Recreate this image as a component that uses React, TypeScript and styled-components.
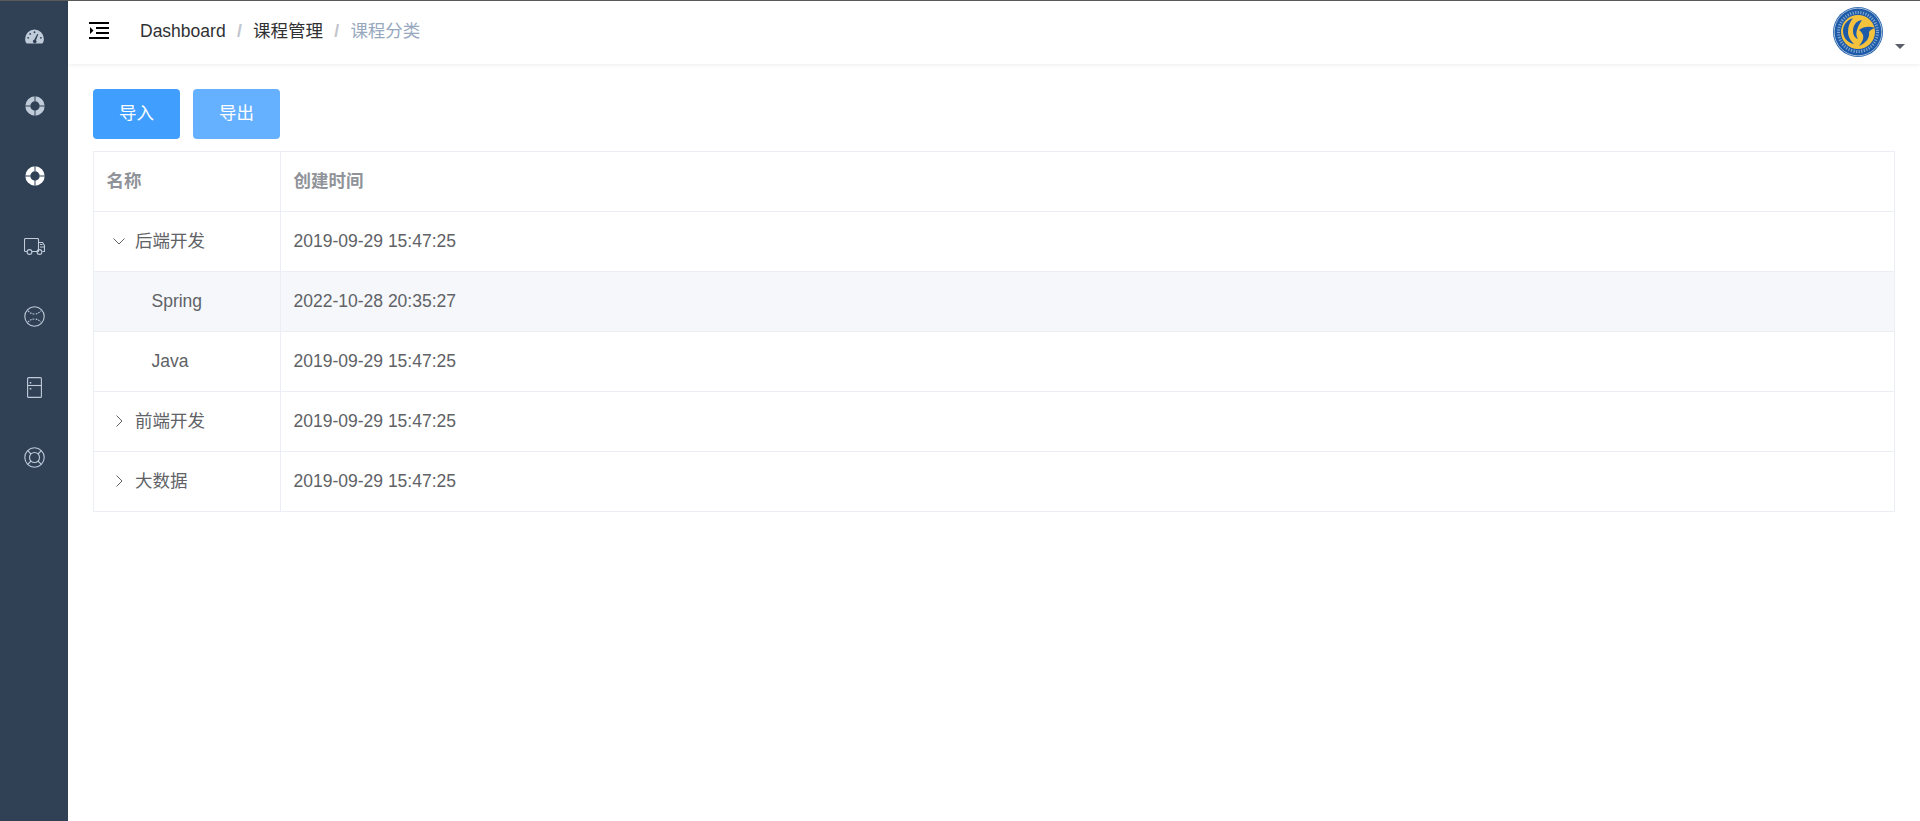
import React from "react";
import styled, { createGlobalStyle } from "styled-components";

const Global = createGlobalStyle`
  html, body { margin: 0; padding: 0; height: 100%; background: #fff; }
  body { font-family: "Liberation Sans", "Noto Sans CJK SC", sans-serif; }
  #root { height: 100%; }
`;

const Page = styled.div`
  display: flex;
  height: 821px;
  border-top: 1px solid #5a5a5a;
  box-sizing: border-box;
  overflow: hidden;
`;
const Sidebar = styled.nav`
  flex: 0 0 68px;
  width: 68px;
  background: #304156;
  display: flex;
  flex-direction: column;
`;
const NavItem = styled.div<{ $active?: boolean }>`
  height: 70.2px;
  display: flex;
  align-items: center;
  justify-content: center;
  padding-left: 1px;
  box-sizing: border-box;
  color: ${(p) => (p.$active ? "#ffffff" : "#bfcbd9")};
`;
const Main = styled.div`
  flex: 1;
  min-width: 0;
  display: flex;
  flex-direction: column;
`;
const Header = styled.header`
  height: 63px;
  display: flex;
  align-items: center;
  background: #fff;
  box-shadow: 0 1px 4px rgba(0, 21, 41, 0.08);
  padding-left: 21px;
  position: relative;
`;
const Hamburger = styled.div`
  width: 20px;
  height: 20px;
  display: flex;
  color: #000;
  margin-top: -3px;
`;
const Crumbs = styled.div`
  margin-left: 31px;
  display: flex;
  align-items: center;
  font-size: 17.5px;
  line-height: 20px;
  margin-top: -3px;
  color: #303133;
`;
const Crumb = styled.span<{ $last?: boolean }>`
  color: ${(p) => (p.$last ? "#97a8be" : "#303133")};
`;
const Sep = styled.span`
  margin: 0 11.25px;
  color: #c0c4cc;
  font-weight: 700;
  font-size: 17.5px;
`;
const Avatar = styled.div`
  margin-left: auto;
  display: flex;
  align-items: flex-end;
  height: 50px;
  padding-right: 15px;
  margin-top: -1px;
`;
const Caret = styled.div`
  width: 0;
  height: 0;
  border-left: 5px solid transparent;
  border-right: 5px solid transparent;
  border-top: 5px solid #5a5e66;
  margin-left: 12px;
  margin-bottom: 8px;
`;
const Content = styled.main`
  padding: 25px 25px 0 25px;
  display: flex;
  flex-direction: column;
`;
const Toolbar = styled.div`
  display: flex;
  gap: 13px;
  margin-bottom: 12px;
`;
const Btn = styled.button<{ $light?: boolean }>`
  width: 87px;
  height: 50px;
  border: 0;
  border-radius: 4px;
  background: ${(p) => (p.$light ? "#66b1ff" : "#409eff")};
  color: #fff;
  font-family: inherit;
  font-size: 17.5px;
  line-height: 20px;
  padding: 0 0 3px;
`;
const Table = styled.div`
  border: 1px solid #ebeef5;
  border-bottom: 0;
  font-size: 17.5px;
  color: #606266;
`;
const Row = styled.div<{ $hover?: boolean }>`
  display: grid;
  grid-template-columns: 186px 1fr;
  height: 60px;
  box-sizing: border-box;
  border-bottom: 1px solid #ebeef5;
  background: ${(p) => (p.$hover ? "#f5f7fa" : "#fff")};
`;
const Cell = styled.div`
  display: flex;
  align-items: center;
  padding-left: 12.5px;
  line-height: 20px;
  padding-bottom: 1px;
  & + & { border-left: 1px solid #ebeef5; }
`;
const Head = styled(Cell)`
  color: #909399;
  font-weight: 700;
  padding-bottom: 1px;
`;
const Expand = styled.span`
  width: 24px;
  height: 20px;
  margin-right: 4.5px;
  display: flex;
  align-items: center;
  justify-content: center;
  color: #606266;
`;
const Indent = styled.span`
  display: inline-block;
  width: 45px;
`;

const Chevron = ({ open }: { open?: boolean }) => (
  <svg width="14" height="14" viewBox="0 0 14 14" fill="none" stroke="currentColor" strokeWidth="1">
    {open ? <path d="M1.5 4.500L7 10l5.500-5.500" /> : <path d="M4.500 1.500L10 7l-5.500 5.500" />}
  </svg>
);

const Gauge = () => (
  <svg width="19" height="15" viewBox="0 0 20 16" fill="currentColor">
    <path d="M10 .5A10 10 0 0 0 0 10.500c0 1.700.4 3.200 1 4.200.3.500.6.800 1 .8h16c.4 0 .7-.3 1-.8.6-1 1-2.500 1-4.200A10 10 0 0 0 10 .5z" />
    <g fill="#304156">
      <circle cx="10" cy="3.400" r="1" />
      <circle cx="5.400" cy="5.200" r="1" />
      <circle cx="3.200" cy="9.400" r="1" />
      <circle cx="16.800" cy="9.400" r="1" />
      <path d="M12.900 5.200l1.100.500-2.400 6.300a1.900 1.900 0 1 1-1.900-.5z" />
    </g>
  </svg>
);
const Ring = () => (
  <svg width="20" height="20" viewBox="0 0 20 20">
    <circle cx="10" cy="10" r="7.200" fill="none" stroke="currentColor" strokeWidth="5" />
    <path d="M10 0v5.500M10 14.500V20M0 10h5.500M14.500 10H20" stroke="#304156" strokeWidth="1" />
  </svg>
);
const Truck = () => (
  <svg width="21" height="17" viewBox="0 0 21 17" fill="none" stroke="currentColor" strokeWidth="1.100">
    <path d="M3 13.500H1.500a1 1 0 0 1-1-1v-11a1 1 0 0 1 1-1h12a1 1 0 0 1 1 1v12H8" />
    <path d="M14.500 4.500h4l2 3v6h-2M14.500 13.500h-1" />
    <path d="M16 6.500h2.500M16 9h4" />
    <circle cx="5.500" cy="14" r="2.400" />
    <circle cx="15.500" cy="14" r="2.400" />
  </svg>
);
const Ball = () => (
  <svg width="21" height="21" viewBox="0 0 21 21" fill="none" stroke="currentColor" strokeWidth="1.100">
    <circle cx="10.500" cy="10.500" r="9.700" />
    <path d="M4 5c2 1.500 3 3 6.500 3S15 6.500 17 5M4 16c2-1.500 3-3 6.500-3s4.500 1.500 6.500 3" strokeDasharray="1.600 1.200" />
  </svg>
);
const Fridge = () => (
  <svg width="15" height="21" viewBox="0 0 15 21" fill="none" stroke="currentColor" strokeWidth="1.100">
    <rect x=".6" y=".6" width="13.800" height="19.800" rx="1" />
    <path d="M.6 8.500h13.800" />
    <path d="M3.500 5v1.500M3.500 11v1.500" strokeWidth="1.600" />
  </svg>
);
const Buoy = () => (
  <svg width="21" height="21" viewBox="0 0 21 21" fill="none" stroke="currentColor" strokeWidth="1.100">
    <circle cx="10.500" cy="10.500" r="9.700" />
    <circle cx="10.500" cy="10.500" r="5" />
    <path d="M3.700 3.700l3.300 3.300M17.300 3.700L14 7M3.700 17.300L7 14M17.300 17.300L14 14" />
  </svg>
);

const Logo = () => (
  <svg width="50" height="50" viewBox="0 0 50 50">
    <circle cx="25" cy="25" r="25" fill="#1d5ba8" />
    <circle cx="25" cy="25" r="23.800" fill="none" stroke="#fff" strokeWidth=".6" />
    <circle cx="25" cy="25" r="19.500" fill="none" stroke="#cfe0f2" strokeWidth="3" strokeDasharray="1.200 1.400" opacity=".55" />
    <circle cx="25" cy="25" r="17" fill="#f5c23e" />
    <path d="M20 11c-6 2-10 7-10 13 0 7 5 12 11 13-3-3-6-7-6-12 0-6 2-10 5-14z" fill="#1d5ba8" />
    <path d="M29 13c-6 1-9 5-9 11 0 4 2 7 5 8-2-3-2-6-1-9 1-4 3-7 5-10z" fill="#1d5ba8" />
    <path d="M26 23c5-4 11-4 16-2-3 1-5 2-6 4 1 6-3 11-10 14 3-4 5-7 4-11-1-2-2-4-4-5z" fill="#1d5ba8" />
  </svg>
);

const rows = [
  { name: "后端开发", time: "2019-09-29 15:47:25", exp: "open" },
  { name: "Spring", time: "2022-10-28 20:35:27", hover: true },
  { name: "Java", time: "2019-09-29 15:47:25" },
  { name: "前端开发", time: "2019-09-29 15:47:25", exp: "closed" },
  { name: "大数据", time: "2019-09-29 15:47:25", exp: "closed" },
];

export default function App() {
  return (
    <>
      <Global />
      <Page>
        <Sidebar>
          <NavItem><Gauge /></NavItem>
          <NavItem><Ring /></NavItem>
          <NavItem $active><Ring /></NavItem>
          <NavItem><Truck /></NavItem>
          <NavItem><Ball /></NavItem>
          <NavItem><Fridge /></NavItem>
          <NavItem><Buoy /></NavItem>
        </Sidebar>
        <Main>
          <Header>
            <Hamburger>
              <svg width="20" height="20" viewBox="0 0 20 20" fill="currentColor">
                <path d="M0 1h20v2H0zM7 6h13v2H7zM7 11h13v2H7zM0 16h20v2H0zM1 6l3.500 3.500L1 13z" />
              </svg>
            </Hamburger>
            <Crumbs>
              <Crumb>Dashboard</Crumb>
              <Sep>/</Sep>
              <Crumb>课程管理</Crumb>
              <Sep>/</Sep>
              <Crumb $last>课程分类</Crumb>
            </Crumbs>
            <Avatar>
              <Logo />
              <Caret />
            </Avatar>
          </Header>
          <Content>
            <Toolbar>
              <Btn>导入</Btn>
              <Btn $light>导出</Btn>
            </Toolbar>
            <Table>
              <Row>
                <Head>名称</Head>
                <Head>创建时间</Head>
              </Row>
              {rows.map((r) => (
                <Row key={r.name} $hover={r.hover}>
                  <Cell>
                    {r.exp ? (
                      <Expand><Chevron open={r.exp === "open"} /></Expand>
                    ) : (
                      <Indent />
                    )}
                    {r.name}
                  </Cell>
                  <Cell>{r.time}</Cell>
                </Row>
              ))}
            </Table>
          </Content>
        </Main>
      </Page>
    </>
  );
}
